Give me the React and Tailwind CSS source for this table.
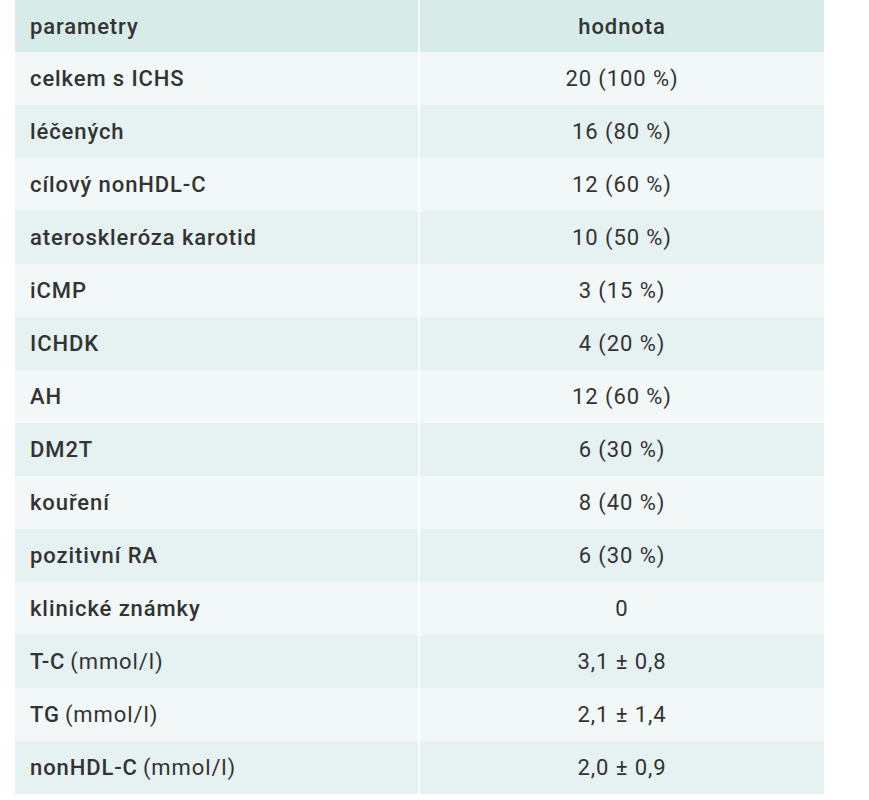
const rows = [
  ['celkem s ICHS', null, '20 (100 %)'],
  ['léčených', null, '16 (80 %)'],
  ['cílový nonHDL-C', null, '12 (60 %)'],
  ['ateroskleróza karotid', null, '10 (50 %)'],
  ['iCMP', null, '3 (15 %)'],
  ['ICHDK', null, '4 (20 %)'],
  ['AH', null, '12 (60 %)'],
  ['DM2T', null, '6 (30 %)'],
  ['kouření', null, '8 (40 %)'],
  ['pozitivní RA', null, '6 (30 %)'],
  ['klinické známky', null, '0'],
  ['T-C', '(mmol/l)', '3,1 ± 0,8'],
  ['TG', '(mmol/l)', '2,1 ± 1,4'],
  ['nonHDL-C', '(mmol/l)', '2,0 ± 0,9'],
];

export default function App() {
  return (
    <div className="min-h-screen bg-white pl-[15px] font-['Roboto',sans-serif] text-[22px] tracking-[0.9px] text-[#333]">
      <div className="w-[809px]">
        {/* Header */}
        <div className="flex h-[52px] bg-[#d7ebe8]">
          <div className="flex w-[403px] items-center pl-[15px] font-medium">parametry</div>
          <div className="w-[2px] bg-white/80" />
          <div className="flex flex-1 items-center justify-center font-medium">hodnota</div>
        </div>

        {rows.map(([label, unit, value], i) => (
          <div key={i} className={`flex h-[53px] ${i % 2 === 0 ? 'bg-[#f2f8f8]' : 'bg-[#e6f1f1]'}`}>
            <div className="flex w-[403px] items-center pl-[15px]">
              <span className="font-medium">{label}</span>
              {unit && <span className="ml-[5px]">{unit}</span>}
            </div>
            <div className="w-[2px] bg-white/80" />
            <div className="flex flex-1 items-center justify-center">{value}</div>
          </div>
        ))}
      </div>
    </div>
  );
}
